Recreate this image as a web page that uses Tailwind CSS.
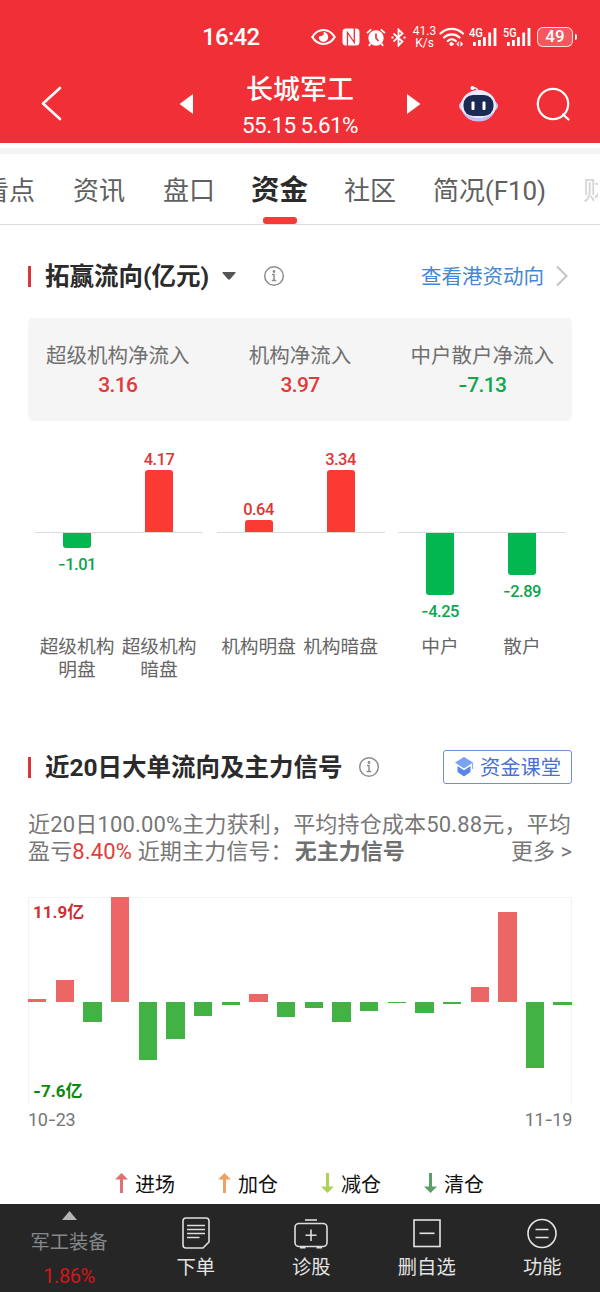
<!DOCTYPE html>
<html lang="zh-CN">
<head>
    <meta charset="UTF-8">
    <meta name="viewport" content="width=device-width, initial-scale=1.0">
    <title>长城军工 - 资金</title>
    <script src="https://cdn.jsdelivr.net/npm/@tailwindcss/browser@4"></script>
</head>
<body class="w-[600px] h-[1292px] overflow-hidden flex flex-col bg-white text-[#666] font-['Roboto','Noto_Sans_CJK_SC',sans-serif] whitespace-nowrap">

    <header class="h-[143px] shrink-0 bg-[#f12f37] text-white">
        <!-- Status bar -->
        <div class="h-[66px] pt-2 pl-[202px] flex items-center">
            <span class="w-[109px] text-[24px] leading-[30px] font-medium tracking-[-0.7px]">16:42</span>
            <svg class="mr-[6px]" width="25" height="18" viewBox="0 0 25 18" fill="none" stroke="#fff" stroke-width="2.2">
                <path d="M1.3 9C4 4.500 8 2 12.500 2s8.500 2.500 11.200 7c-2.700 4.500-6.700 7-11.200 7S4 13.500 1.300 9z"/>
                <path d="M12.500 4c1 2.200-.3 3.700-2.200 3.900-1.300.1-2.300.3-2.500 1.300 0 2.600 2.200 4.600 4.700 4.600s4.700-2.100 4.700-4.800S15 4 12.500 4z" fill="#fff" stroke="none"/>
            </svg>
            <svg class="mr-[6px]" width="18" height="18" viewBox="0 0 18 18">
                <path d="M4 .5h10q3.500 0 3.500 3.500v10q0 3.500-3.500 3.500H4Q.5 17.500.5 14V4Q.5.500 4 .500z" fill="#fff"/>
                <path d="M5.500 18V4.500l6.800 10V0" fill="none" stroke="#f12f37" stroke-width="1.300"/>
            </svg>
            <svg class="mr-[5px]" width="20" height="19" viewBox="0 0 20 19" fill="none" stroke="#fff" stroke-width="1.800">
                <circle cx="10" cy="10" r="7.700" fill="#fff" stroke="none"/>
                <path d="M1 5.200 5.200 1.300M19 5.200l-4.200-3.900M4.500 15.500 3 18M15.500 15.500 17 18"/>
                <path d="M10 5.500V10l2.500 3" stroke="#f12f37" stroke-width="1.700"/>
            </svg>
            <svg class="mr-[5px]" width="15" height="19" viewBox="0 0 15 19" fill="none" stroke="#fff" stroke-width="1.800">
                <path d="M2.500 5.500l9 8-4 4v-16l4 4-9 8"/>
                <path d="M.5 9.500h2M12.500 9.500h2"/>
            </svg>
            <div class="w-[27px] text-[12px] leading-[12px] text-center mr-[1px]">
                <div>41.3</div>
                <div>K/s</div>
            </div>
            <svg class="mr-[4px]" width="26" height="20" viewBox="0 0 26 20" fill="none" stroke="#fff" stroke-width="2.200" stroke-linecap="round">
                <path d="M1.500 6.500C8 .3 17.500.3 24 6.500M5 10.500c4.500-4.200 11-4.200 15.500 0M8.800 14c2.300-2.200 5.600-2.200 8 0"/>
                <circle cx="12.500" cy="17" r="1.600" fill="#fff" stroke-width="1"/>
                <path d="M19.500 15l-1.800 2 1.800 2zM22 15l1.800 2-1.800 2z" fill="#fff" stroke-width=".6"/>
            </svg>
            <svg class="mr-[6px]" width="28" height="20" viewBox="0 0 28 20" fill="#fff">
                <text x="0" y="9.500" font-size="12" font-weight="500" font-family="Roboto" textLength="14" lengthAdjust="spacingAndGlyphs">4G</text>
                <path d="M4 15h2.800v4H4zM9 13h2.800v6H9zM14 10h2.800v9H14zM19.300 5.500h2.800V19h-2.800zM24.600 1h2.800v18h-2.800z"/>
            </svg>
            <svg class="mr-[6px]" width="28" height="20" viewBox="0 0 28 20" fill="#fff">
                <text x="0" y="9.500" font-size="12" font-weight="500" font-family="Roboto" textLength="13.500" lengthAdjust="spacingAndGlyphs">5G</text>
                <path d="M4 15h2.800v4H4zM9 13h2.800v6H9zM14 10h2.800v9H14zM19.300 5.500h2.800V19h-2.800zM24.600 1h2.800v18h-2.800z"/>
            </svg>
            <div class="w-[36px] h-[20px] rounded-[6px] border-[1.500px] border-white/80 bg-white/20 flex items-center justify-center text-[17px] font-medium">49</div>
            <div class="w-[2px] h-[6px] ml-[2px] rounded-r bg-white"></div>
        </div>

        <!-- Stock title -->
        <div class="flex h-[77px]">
            <svg class="ml-[40px] mt-[20px]" width="22" height="35" viewBox="0 0 22 35" fill="none" stroke="#fff" stroke-width="2.600" stroke-linecap="round" stroke-linejoin="round">
                <path d="M20 2 3 17.500 20 33"/>
            </svg>
            <svg class="ml-[117px] mt-[28px]" width="14" height="20" viewBox="0 0 14 20" fill="#fff"><path d="M14 0v20L.5 10z"/></svg>
            <div class="w-[214px] text-center">
                <h1 class="text-[27px] leading-[36px] font-medium mt-[6px]">长城军工</h1>
                <p class="text-[22.500px] leading-[28px] mt-[3px] tracking-[-0.600px]">55.15 5.61%</p>
            </div>
            <svg class="mt-[28px]" width="14" height="20" viewBox="0 0 14 20" fill="#fff"><path d="M0 0v20l13.500-10z"/></svg>
            <svg class="ml-[37px] mt-[18px]" width="41" height="40" viewBox="0 0 41 40">
                <path d="M15 4q4.500-.5 5 4" fill="none" stroke="#e9dcf5" stroke-width="1.800"/>
                <circle cx="14.500" cy="4" r="2" fill="#fff"/>
                <ellipse cx="20.500" cy="22" rx="19.500" ry="8.500" fill="#d3c4f5"/>
                <ellipse cx="20.500" cy="21.500" rx="17.500" ry="15.500" fill="#eceaff"/>
                <path d="M5 28.500q15.500 11 31 0-4 9-15.500 9T5 28.500z" fill="#c3bdf8"/>
                <rect x="5.500" y="11" width="30" height="21" rx="9.500" fill="#1b2a52"/>
                <rect x="13.500" y="17.500" width="3" height="8.500" rx="1" fill="#fff"/>
                <rect x="24.500" y="17.500" width="3" height="8.500" rx="1" fill="#fff"/>
            </svg>
            <svg class="ml-[37px] mt-[21px]" width="35" height="35" viewBox="0 0 35 35" fill="none" stroke="#fff" stroke-width="2.200" stroke-linecap="round">
                <circle cx="17" cy="17" r="15.200"/>
                <path d="M27 27.500l5.500 5"/>
            </svg>
        </div>
    </header>

    <div class="h-[11px] shrink-0 border-t-[5px] border-white bg-[#f3f3f3]"></div>

    <!-- Tabs -->
    <nav class="h-[71px] shrink-0 flex items-stretch border-b border-[#ddd] text-[26px] leading-[74px] text-[#606060] gap-[38px]">
        <span class="-ml-[17px]">看点</span>
        <span>资讯</span>
        <span>盘口</span>
        <span class="relative -ml-[2px] w-[56px] text-[28.500px] font-bold text-[#2b2b2b]">资金
            <i class="absolute left-[12px] bottom-0 w-[34px] h-[7px] rounded-[3px] bg-[#f23c38]"></i>
        </span>
        <span class="-ml-[1px]">社区</span>
        <span class="-ml-[1px] tracking-[-0.100px]">简况(F10)</span>
        <span class="-ml-[1px] w-[15px] overflow-hidden text-[#d5d5d5]">财</span>
    </nav>

    <main class="h-[979px] shrink-0 px-[28px] bg-white">
        <!-- Fund flow -->
        <div class="flex items-center h-[36px] mt-[33px]">
            <i class="w-[3px] h-[21px] bg-[#d9363a] mr-[14px]"></i>
            <h2 class="text-[24.500px] font-bold text-[#2b2b2b] w-[177px] pt-[3px]">拓赢流向(亿元)</h2>
            <svg width="14" height="8" viewBox="0 0 14 8" fill="#555"><path d="M1 0h12q1 .3.500 1L8 7.300q-1 .9-2 0L.5 1Q0 .3 1 0z"/></svg>
            <svg class="ml-[27px]" width="22" height="22" viewBox="0 0 22 22" fill="none" stroke="#8e8e8e" stroke-width="1.500">
                <circle cx="11" cy="11" r="9.300"/>
                <path d="M9 9.500h2V15.500M8.700 15.500h4.600"/>
                <circle cx="11" cy="6.500" r=".7" fill="#8e8e8e"/>
            </svg>
            <a class="ml-auto pt-[3px] text-[20.500px] text-[#4288d2]">查看港资动向</a>
            <svg class="ml-[12px] mr-[4px]" width="12" height="22" viewBox="0 0 12 22" fill="none" stroke="#c4c4c4" stroke-width="2"><path d="M1 1.500 10.500 11 1 20.500"/></svg>
        </div>

        <div class="mt-[24px] h-[103px] rounded-[5px] bg-[#f5f5f5] flex justify-between px-[18px] pt-[22px] text-center text-[20.500px] text-[#707070]">
            <div>
                <div class="leading-[32px]">超级机构净流入</div>
                <div class="text-[21px] leading-[26px] font-medium tracking-[-0.600px] text-[#e03a3a]">3.16</div>
            </div>
            <div>
                <div class="leading-[32px]">机构净流入</div>
                <div class="text-[21px] leading-[26px] font-medium tracking-[-0.600px] text-[#e03a3a]">3.97</div>
            </div>
            <div>
                <div class="leading-[32px]">中户散户净流入</div>
                <div class="text-[21px] leading-[26px] font-medium tracking-[-0.600px] text-[#0ca84c]"><span class="font-['Inter']">-</span>7.13</div>
            </div>
        </div>

        <!-- Bars by holder type -->
        <div id="holder-chart" class="mt-[29px] ml-[7px] flex gap-[13.500px] text-[16.500px] font-medium tracking-[-0.5px] text-center"></div>
        <div class="mt-[24px] ml-[7px] flex gap-[13.500px] text-[18.700px] leading-[22.500px] text-center">
            <div class="w-[168px] pl-[1px] flex"><p class="w-[82px]">超级机构<br>明盘</p><p class="w-[82px]">超级机构<br>暗盘</p></div>
            <div class="w-[168px] pl-[1px] flex"><p class="w-[82px]">机构明盘</p><p class="w-[82px]">机构暗盘</p></div>
            <div class="w-[168px] pl-[1px] flex"><p class="w-[82px]">中户</p><p class="w-[82px]">散户</p></div>
        </div>

        <!-- 20 day signals -->
        <div class="flex items-center h-[34px] mt-[69px]">
            <i class="w-[3px] h-[21px] bg-[#d9363a] mr-[14px]"></i>
            <h2 class="text-[24.500px] font-bold text-[#2b2b2b] w-[313px] pt-[2px]">近20日大单流向及主力信号</h2>
            <svg width="22" height="22" viewBox="0 0 22 22" fill="none" stroke="#8e8e8e" stroke-width="1.500">
                <circle cx="11" cy="11" r="9.300"/>
                <path d="M9 9.500h2V15.500M8.700 15.500h4.600"/>
                <circle cx="11" cy="6.500" r=".7" fill="#8e8e8e"/>
            </svg>
            <a class="ml-auto w-[129px] h-[34px] rounded-[3px] border border-[#6f8fd8] flex items-center pl-[10px] text-[20.300px] text-[#4a70d6]">
                <svg class="mr-[6px]" width="20" height="20" viewBox="0 0 20 20">
                    <path d="M10 0 19 5.500 10 11.500 1 5.500z" fill="#7ba2ef"/>
                    <path d="M3.500 9l6.500 4.300L16.500 9v6L10 19.500 3.500 15z" fill="#5a86e4"/>
                    <path d="M18.500 6v6" stroke="#8fb0f0" stroke-width="1.200"/>
                </svg>
                <span class="pt-[2px]">资金课堂</span>
            </a>
        </div>

        <div class="mt-[27px] text-[22px] leading-[27px] text-[#777]">
            <p class="tracking-[0.170px]">近20日100.00%主力获利，平均持仓成本50.88元，平均</p>
            <div class="flex">
                <span class="tracking-[0.150px]">盈亏<span class="text-[#e23c3c]">8.40%</span> 近期主力信号：</span>
                <b class="ml-[2px] font-bold text-[#707070]">无主力信号</b>
                <span class="ml-auto">更多 &gt;</span>
            </div>
        </div>

        <div class="relative mt-[32px] h-[208px] border-x border-t border-[#f3f3f3]">
            <div id="signal-chart" class="-mx-[1px] -mt-[1px] flex justify-between"></div>
            <span class="absolute left-[4px] top-[2px] text-[17px] leading-[24px] font-bold text-[#cf3038]">11.9亿</span>
            <span class="absolute left-[4px] bottom-[2px] text-[17px] leading-[24px] font-bold text-[#0a8a0a]"><span class="font-['Inter']">-</span>7.6亿</span>
        </div>
        <div class="mt-[3px] flex justify-between text-[18px] leading-[24px] tracking-[-0.300px] text-[#777]">
            <span>10<span class="font-['Inter']">-</span>23</span>
            <span>11<span class="font-['Inter']">-</span>19</span>
        </div>

        <!-- Legend -->
        <div class="mt-[36px] ml-[87px] flex gap-[43px] text-[20px] leading-[30px] text-[#111]">
            <span class="flex items-center gap-[7px]">
                <svg width="13" height="20" viewBox="0 0 13 20" fill="#e27070"><path d="M6.500 0 13 6.500H8V20H5V6.500H0z"/></svg><span class="pt-[2px] -mb-[2px]">进场</span>
            </span>
            <span class="flex items-center gap-[7px]">
                <svg width="13" height="20" viewBox="0 0 13 20" fill="#f0a060"><path d="M6.500 0 13 6.500H8V20H5V6.500H0z"/></svg><span class="pt-[2px] -mb-[2px]">加仓</span>
            </span>
            <span class="flex items-center gap-[7px]">
                <svg width="13" height="20" viewBox="0 0 13 20" fill="#acd154"><path d="M6.500 20 0 13.500h5V0h3v13.500h5z"/></svg><span class="pt-[2px] -mb-[2px]">减仓</span>
            </span>
            <span class="flex items-center gap-[7px]">
                <svg width="13" height="20" viewBox="0 0 13 20" fill="#58a068"><path d="M6.500 20 0 13.500h5V0h3v13.500h5z"/></svg><span class="pt-[2px] -mb-[2px]">清仓</span>
            </span>
        </div>
    </main>

    <footer class="h-[88px] shrink-0 flex bg-[#262626] text-[#e4e4e4] text-[19.300px] leading-[28px] text-center">
        <div class="w-[138px] flex flex-col items-center pt-[7px] text-[#85888b]">
            <svg width="15" height="9" viewBox="0 0 15 9" fill="#b5b5b5"><path d="M7.500 0 15 9H0z"/></svg>
            <span class="mt-[9px]">军工装备</span>
            <span class="mt-[5px] text-[20px] tracking-[-0.4px] text-[#d61518]">1.86%</span>
        </div>
        <div class="w-[115.500px] flex flex-col items-center pt-[12px]">
            <svg width="30" height="34" viewBox="0 0 30 34" fill="none" stroke="#dedede" stroke-width="1.600">
                <path d="M5 2h20q3 0 3 3v21l-6 6H5q-3 0-3-3V5q0-3 3-3z"/>
                <path d="M6 9.500h18M6 13.500h18M6 17.500h18M6 21.500h12.500"/>
            </svg>
            <span class="mt-[4px]">下单</span>
        </div>
        <div class="w-[115.500px] flex flex-col items-center pt-[12px]">
            <svg width="36" height="34" viewBox="0 0 36 34" fill="none" stroke="#dedede" stroke-width="1.600">
                <path d="M12 4h12"/>
                <rect x="2" y="7.500" width="32" height="23" rx="4"/>
                <path d="M18 13.500V25M12.500 19.300h11M7 31.700h5.500M23.500 31.700H29" />
            </svg>
            <span class="mt-[4px]">诊股</span>
        </div>
        <div class="w-[115.500px] flex flex-col items-center pt-[12px]">
            <svg width="30" height="34" viewBox="0 0 30 34" fill="none" stroke="#e4e4e4" stroke-width="1.600">
                <rect x="2" y="4" width="26" height="26.500"/>
                <path d="M7.500 17.300h15"/>
            </svg>
            <span class="mt-[4px]">删自选</span>
        </div>
        <div class="w-[115.500px] flex flex-col items-center pt-[12px]">
            <svg width="32" height="34" viewBox="0 0 32 34" fill="none" stroke="#e4e4e4" stroke-width="1.600">
                <circle cx="16" cy="17.500" r="14"/>
                <path d="M9.500 13.500h13M9.500 21.500h13"/>
            </svg>
            <span class="mt-[4px]">功能</span>
        </div>
    </footer>

<script>
    // label, bar height in px (negative = outflow)
    const holders = [
        [['-1.01', -15], ['4.17', 62.5]],
        [['0.64', 12], ['3.34', 62.5]],
        [['-4.25', -62], ['-2.89', -42]]
    ];
    const holderChart = document.getElementById('holder-chart');
    holders.forEach(group => {
        const cols = group.map(([label, h]) => h > 0
            ? `<div class="w-[82px] flex flex-col items-center">
                   <div class="h-[82px] flex flex-col items-center justify-end">
                       <span class="leading-[20px] text-[#dd3535]">${label}</span>
                       <i class="w-[28px] rounded-t-[3px] bg-[#fb3b33]" style="height:${h}px"></i>
                   </div>
               </div>`
            : `<div class="w-[82px] flex flex-col items-center pt-[83px]">
                   <i class="w-[28px] shrink-0 rounded-b-[3px] bg-[#02b650]" style="height:${-h}px"></i>
                   <span class="leading-[20px] mt-[6px] text-[#0ba54c]"><span class="font-['Inter']">-</span>${label.slice(1)}</span>
               </div>`).join('');
        holderChart.innerHTML += `<div class="w-[168px] h-[162px] pl-[1px] flex relative"><i class="absolute left-0 top-[82px] w-full h-[1px] bg-[#dcdcdc]"></i>${cols}</div>`;
    });

    const signals = [3, 21.5, -20.3, 104.5, -58, -37.3, -14, -3.3, 7.5, -15.3, -6.3, -20.5, -9.7, -1.6, -11, -2.6, 15, 89.5, -66, -3.3];
    document.getElementById('signal-chart').innerHTML = signals.map(v => v > 0
        ? `<div class="w-[18.400px] h-[104.500px] flex items-end"><i class="w-full bg-[#ec6666]" style="height:${v}px"></i></div>`
        : `<div class="w-[18.400px] pt-[104.500px]"><i class="block bg-[#43b244]" style="height:${-v}px"></i></div>`).join('');
</script>
</body>
</html>
